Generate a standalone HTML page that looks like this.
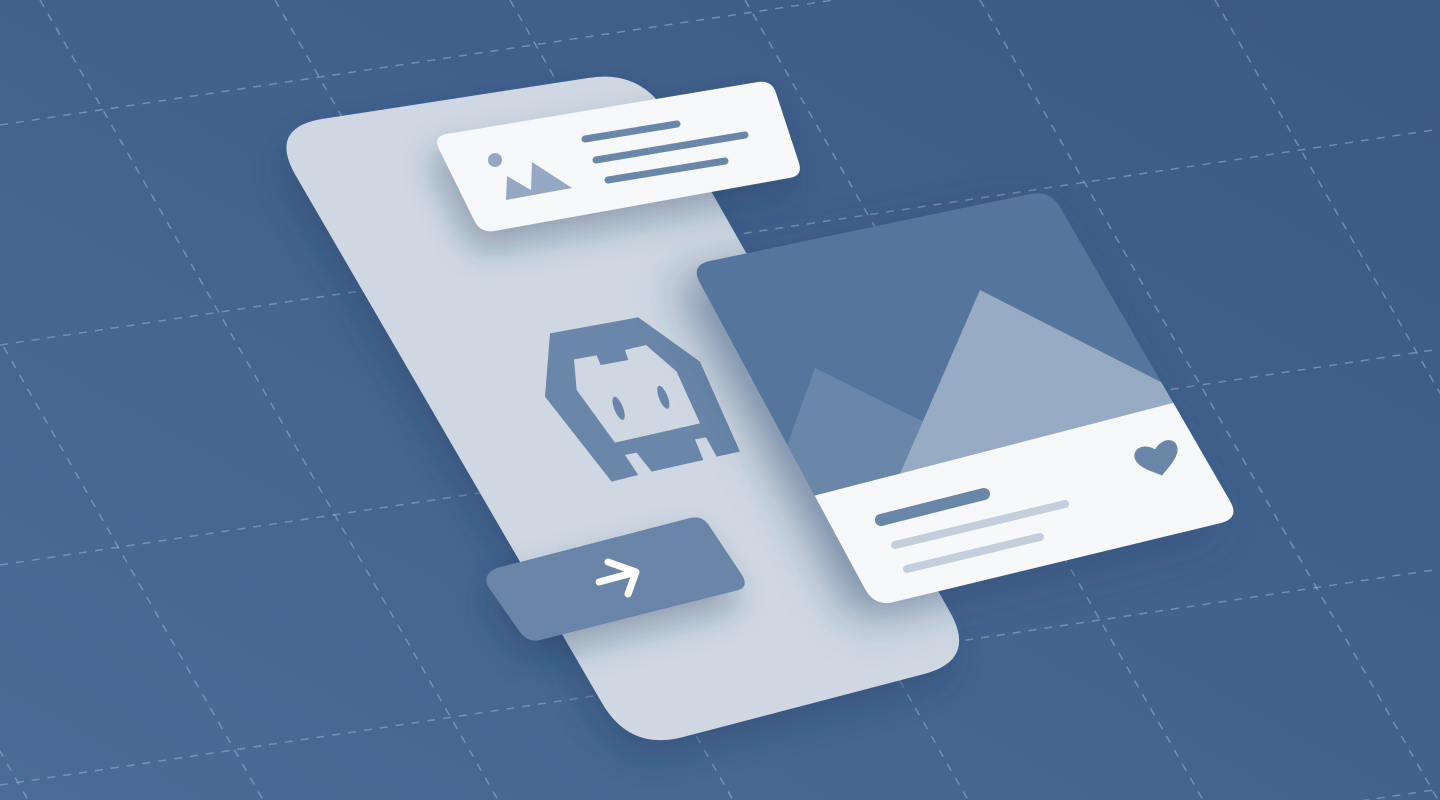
<!DOCTYPE html>
<html><head><meta charset="utf-8"><style>html,body{margin:0;padding:0;width:1440px;height:800px;overflow:hidden}svg{display:block}</style></head>
<body>
<svg width="1440" height="800" viewBox="0 0 1440 800" xmlns="http://www.w3.org/2000/svg">
<defs>
<linearGradient id="bg" x1="0" y1="1" x2="1" y2="0">
<stop offset="0" stop-color="#4b6c98"/><stop offset="1" stop-color="#3a5983"/>
</linearGradient>
<filter id="sh" x="-30%" y="-30%" width="160%" height="180%">
<feDropShadow dx="-6" dy="18" stdDeviation="16" flood-color="#1f3a60" flood-opacity="0.35"/>
</filter>
<filter id="sh2" x="-30%" y="-30%" width="160%" height="180%">
<feDropShadow dx="-18" dy="14" stdDeviation="22" flood-color="#2a4670" flood-opacity="0.5"/>
</filter>
<clipPath id="card"><path d="M710,261 L1030,194 Q1050,190 1060,207 L1230,501 Q1240,518 1221,523 L894,602 Q875,607 865,589 L700,283 Q690,265 710,261 Z"/></clipPath>
</defs>
<rect width="1440" height="800" fill="url(#bg)"/>
<g stroke="#9fb3cf" stroke-opacity="0.55" stroke-width="1.5" stroke-dasharray="8 8" fill="none">
<line x1="0" y1="-95" x2="1440" y2="-311"/>
<line x1="0" y1="125" x2="1440" y2="-91"/>
<line x1="0" y1="345" x2="1440" y2="129"/>
<line x1="0" y1="565" x2="1440" y2="349"/>
<line x1="0" y1="785" x2="1440" y2="569"/>
<line x1="0" y1="1005" x2="1440" y2="789"/>
<line x1="0" y1="1225" x2="1440" y2="1009"/>
<line x1="-430" y1="0" x2="28" y2="800"/>
<line x1="-195" y1="0" x2="263" y2="800"/>
<line x1="40" y1="0" x2="498" y2="800"/>
<line x1="275" y1="0" x2="733" y2="800"/>
<line x1="510" y1="0" x2="968" y2="800"/>
<line x1="745" y1="0" x2="1203" y2="800"/>
<line x1="980" y1="0" x2="1438" y2="800"/>
<line x1="1215" y1="0" x2="1673" y2="800"/>
<line x1="1450" y1="0" x2="1908" y2="800"/>
</g>
<!-- phone -->
<path filter="url(#sh)" fill="#cfd8e2" d="M322,119 L588,78 Q642,69 669,117 L950,612 Q977,660 924,674 L683,737 Q630,751 602,703 L296,176 Q268,128 322,119 Z"/>
<!-- logo -->
<g transform="translate(500,300) scale(0.3333)" fill="#6a86a8">
<path fill-rule="evenodd" d="M150,100 L415,52 L600,185 L720,455 L650,470 L618,412 L585,418 L610,480 L455,515 L410,458 L375,465 L415,525 L335,545 L135,290 Z M222,178 L290,166 L302,195 L385,180 L375,150 L438,135 L530,215 L600,370 L345,428 L230,270 Z"/>
<ellipse cx="0" cy="0" rx="13" ry="37" transform="translate(356,325) rotate(-22)"/>
<ellipse cx="0" cy="0" rx="13" ry="37" transform="translate(490,292) rotate(-22)"/>
</g>
<!-- button -->
<path filter="url(#sh)" fill="#6a85a8" d="M497,568 L690,518 Q703,515 710,527 L742,575 Q750,588 735,591 L540,640 Q528,643 520,632 L489,588 Q481,575 497,568 Z"/>
<g stroke="#fff" stroke-width="7" stroke-linecap="round" stroke-linejoin="round" fill="none">
<path d="M599,582 L636,572 M608,562 L636,572 L628,594"/>
</g>
<!-- top card -->
<path filter="url(#sh)" fill="#f7f8fa" d="M447,134 L758,82 Q772,80 776,93 L799,163 Q803,176 789,178 L494,231 Q480,233 474,220 L439,149 Q433,136 447,134 Z"/>
<g stroke="#6a86a8" stroke-width="7" stroke-linecap="round">
<line x1="585" y1="139" x2="677" y2="124"/>
<line x1="596" y1="160" x2="745" y2="135"/>
<line x1="608" y1="180" x2="725" y2="161"/>
</g>
<circle cx="495" cy="160" r="7" fill="#95a9c4"/>
<path fill="#95a9c4" d="M506,200 L507,176 L531,190 L532,162 L572,188 Z"/>
<!-- big card -->
<g filter="url(#sh2)">
<g clip-path="url(#card)">
<rect x="680" y="180" width="580" height="440" fill="#55759c"/>
<path fill="#6a86a8" d="M760,520 L815,368 L960,440 L960,520 Z"/>
<path fill="#97abc4" d="M880,520 L980,290 L1200,402 L1200,520 Z"/>
<path fill="#f7f8fa" d="M790,502 L1200,396 L1300,700 L790,700 Z"/>
</g>
</g>
<g stroke-linecap="round">
<line x1="881" y1="520" x2="984" y2="494" stroke="#6a86a8" stroke-width="12"/>
<line x1="895" y1="545" x2="1065" y2="504" stroke="#c3cfdd" stroke-width="8"/>
<line x1="907" y1="569" x2="1040" y2="537" stroke="#c3cfdd" stroke-width="8"/>
</g>
<path fill="#6a86a8" transform="translate(1158,460) rotate(-15)" d="M0,16 C-8,10 -22,2 -22,-8 C-22,-17 -10,-21 0,-11 C10,-21 22,-17 22,-8 C22,2 8,10 0,16 Z"/>
</svg>
</body></html>
